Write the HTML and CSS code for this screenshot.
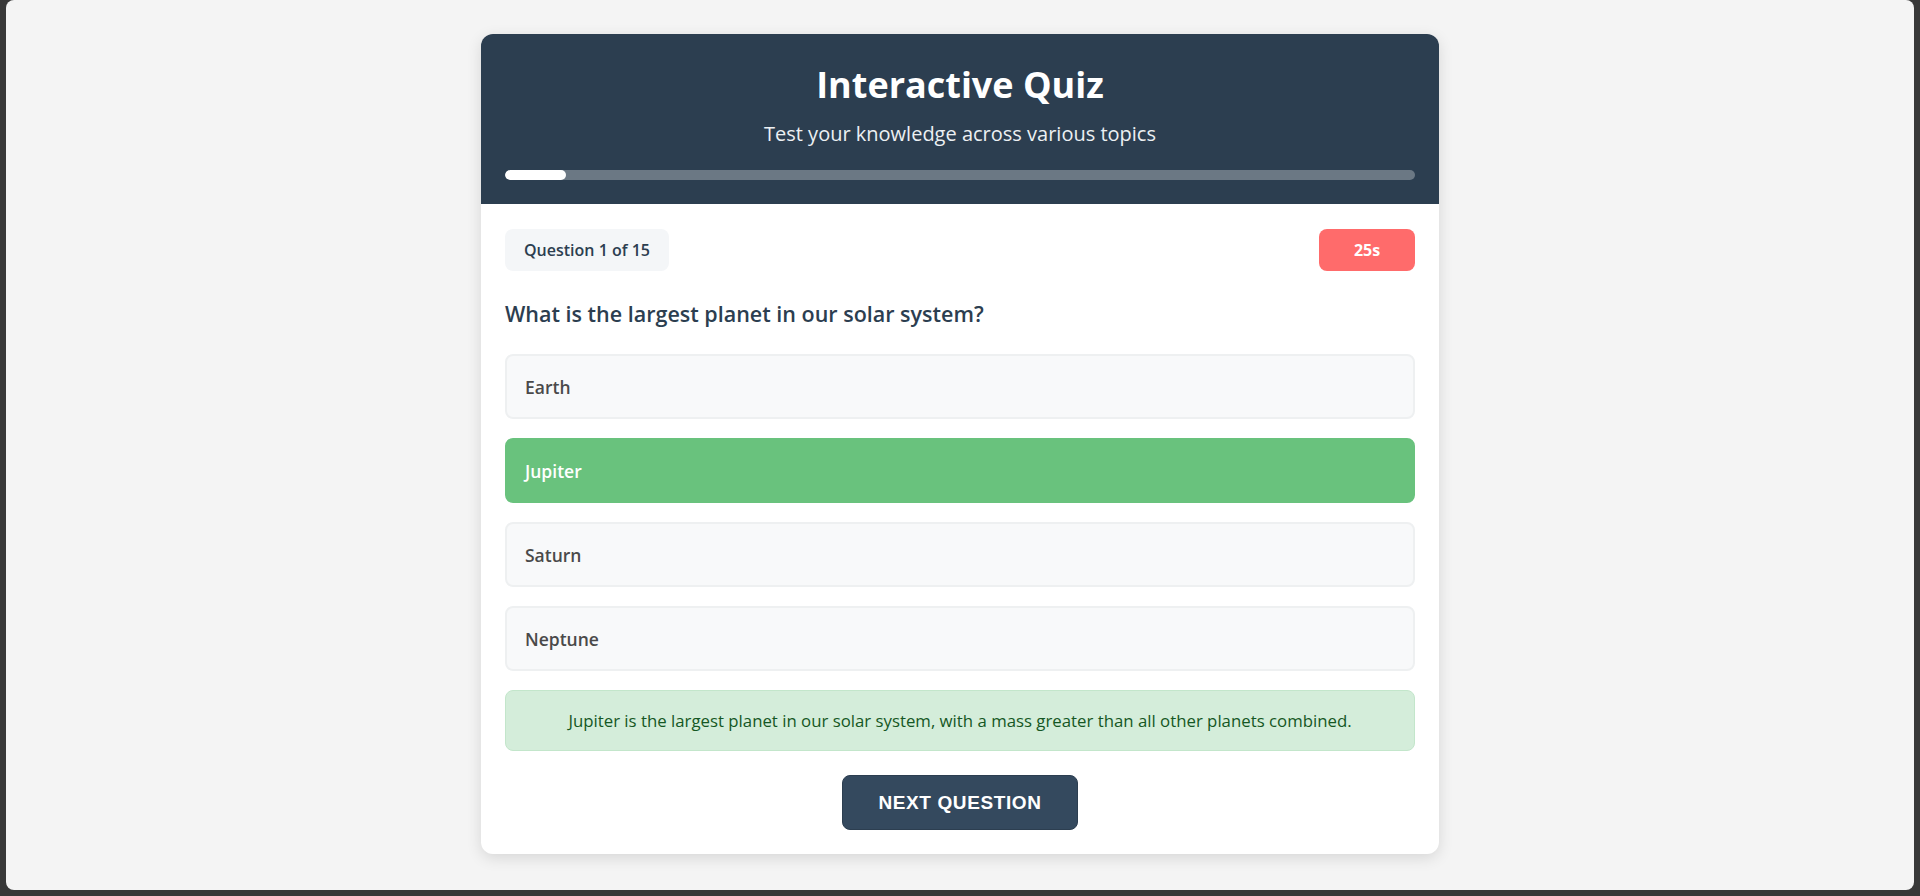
FILE: index.html
```html
<!DOCTYPE html>
<html lang="en">
<head>
<meta charset="utf-8">
<title>Interactive Quiz</title>
<link rel="stylesheet" href="styles.css">
</head>
<body>
<div class="page">
  <div class="quiz-card">
    <header class="quiz-header">
      <h1 class="quiz-title">Interactive Quiz</h1>
      <p class="quiz-subtitle">Test your knowledge across various topics</p>
      <div class="progress"><div class="progress-fill" style="width: 6.67%"></div></div>
    </header>
    <main class="quiz-body">
      <div class="meta-row">
        <span class="counter">Question 1 of 15</span>
        <span class="timer">25s</span>
      </div>
      <h2 class="question">What is the largest planet in our solar system?</h2>
      <div class="options">
        <div class="option">Earth</div>
        <div class="option option-correct">Jupiter</div>
        <div class="option">Saturn</div>
        <div class="option">Neptune</div>
      </div>
      <div class="feedback">Jupiter is the largest planet in our solar system, with a mass greater than all other planets combined.</div>
      <div class="actions">
        <button class="next-btn" type="button">Next Question</button>
      </div>
    </main>
  </div>
</div>
</body>
</html>
```

FILE: styles.css
```css
* { box-sizing: border-box; }

html, body {
  margin: 0;
  padding: 0;
  height: 896px;
  background: #383838;
  overflow: hidden;
}

body {
  font-family: "Open Sans", "Noto Sans", sans-serif;
}

.page {
  margin: 0 6px;
  height: 890px;
  background: #f4f4f4;
  border-radius: 8px;
  display: flex;
  justify-content: center;
  align-items: flex-start;
  padding-top: 34px;
}

.quiz-card {
  width: 958px;
  background: #ffffff;
  border-radius: 12px;
  box-shadow: 0 4px 15px rgba(0, 0, 0, 0.12);
  overflow: hidden;
}

.quiz-header {
  background: #2c3e50;
  color: #ffffff;
  text-align: center;
  padding: 29px 24px 24px;
}

.quiz-title {
  margin: 0;
  font-size: 36px;
  line-height: 44px;
  font-weight: 700;
}

.quiz-subtitle {
  margin: 15px 0 0;
  font-size: 20px;
  line-height: 24px;
  color: #ecf0f3;
}

.progress {
  margin-top: 24px;
  height: 10px;
  border-radius: 5px;
  background: rgba(255, 255, 255, 0.3);
  overflow: hidden;
}

.progress-fill {
  height: 100%;
  background: #ffffff;
  border-radius: 5px;
}

.quiz-body {
  padding: 24px;
}

.meta-row {
  display: flex;
  justify-content: space-between;
  align-items: center;
  margin-top: 1px;
}

.counter {
  background: #f4f6f8;
  color: #2c3e50;
  font-size: 16px;
  font-weight: 600;
  line-height: 22px;
  padding: 10px 19px;
  border-radius: 8px;
}

.timer {
  background: #ff6b6b;
  color: #ffffff;
  font-size: 16px;
  font-weight: 700;
  line-height: 22px;
  padding: 10px 0;
  width: 96px;
  text-align: center;
  border-radius: 8px;
}

.question {
  margin: 28px 0 25px;
  font-size: 21.5px;
  line-height: 30px;
  font-weight: 600;
  color: #2c3e50;
}

.options {
  display: flex;
  flex-direction: column;
  gap: 19px;
}

.option {
  height: 65px;
  display: flex;
  align-items: center;
  padding: 0 18px;
  background: #f8f9fa;
  border: 2px solid #eef0f1;
  border-radius: 8px;
  font-size: 17.5px;
  font-weight: 600;
  color: #4a4a4a;
}

.option-correct {
  background: #69c27d;
  border-color: #69c27d;
  color: #ffffff;
}

.feedback {
  margin-top: 19px;
  height: 61px;
  display: flex;
  align-items: center;
  justify-content: center;
  background: #d4edda;
  border: 1px solid #c3e6cb;
  border-radius: 8px;
  color: #155724;
  font-size: 16.8px;
  font-weight: 500;
}

.actions {
  display: flex;
  justify-content: center;
  margin-top: 24px;
}

.next-btn {
  font-family: "Liberation Sans", Arial, sans-serif;
  font-size: 19px;
  font-weight: 700;
  letter-spacing: 0.6px;
  text-transform: uppercase;
  color: #ffffff;
  background: #34495e;
  border: 1px solid #2c3e50;
  border-radius: 8px;
  width: 236px;
  height: 55px;
  padding: 0;
  cursor: pointer;
}
```
